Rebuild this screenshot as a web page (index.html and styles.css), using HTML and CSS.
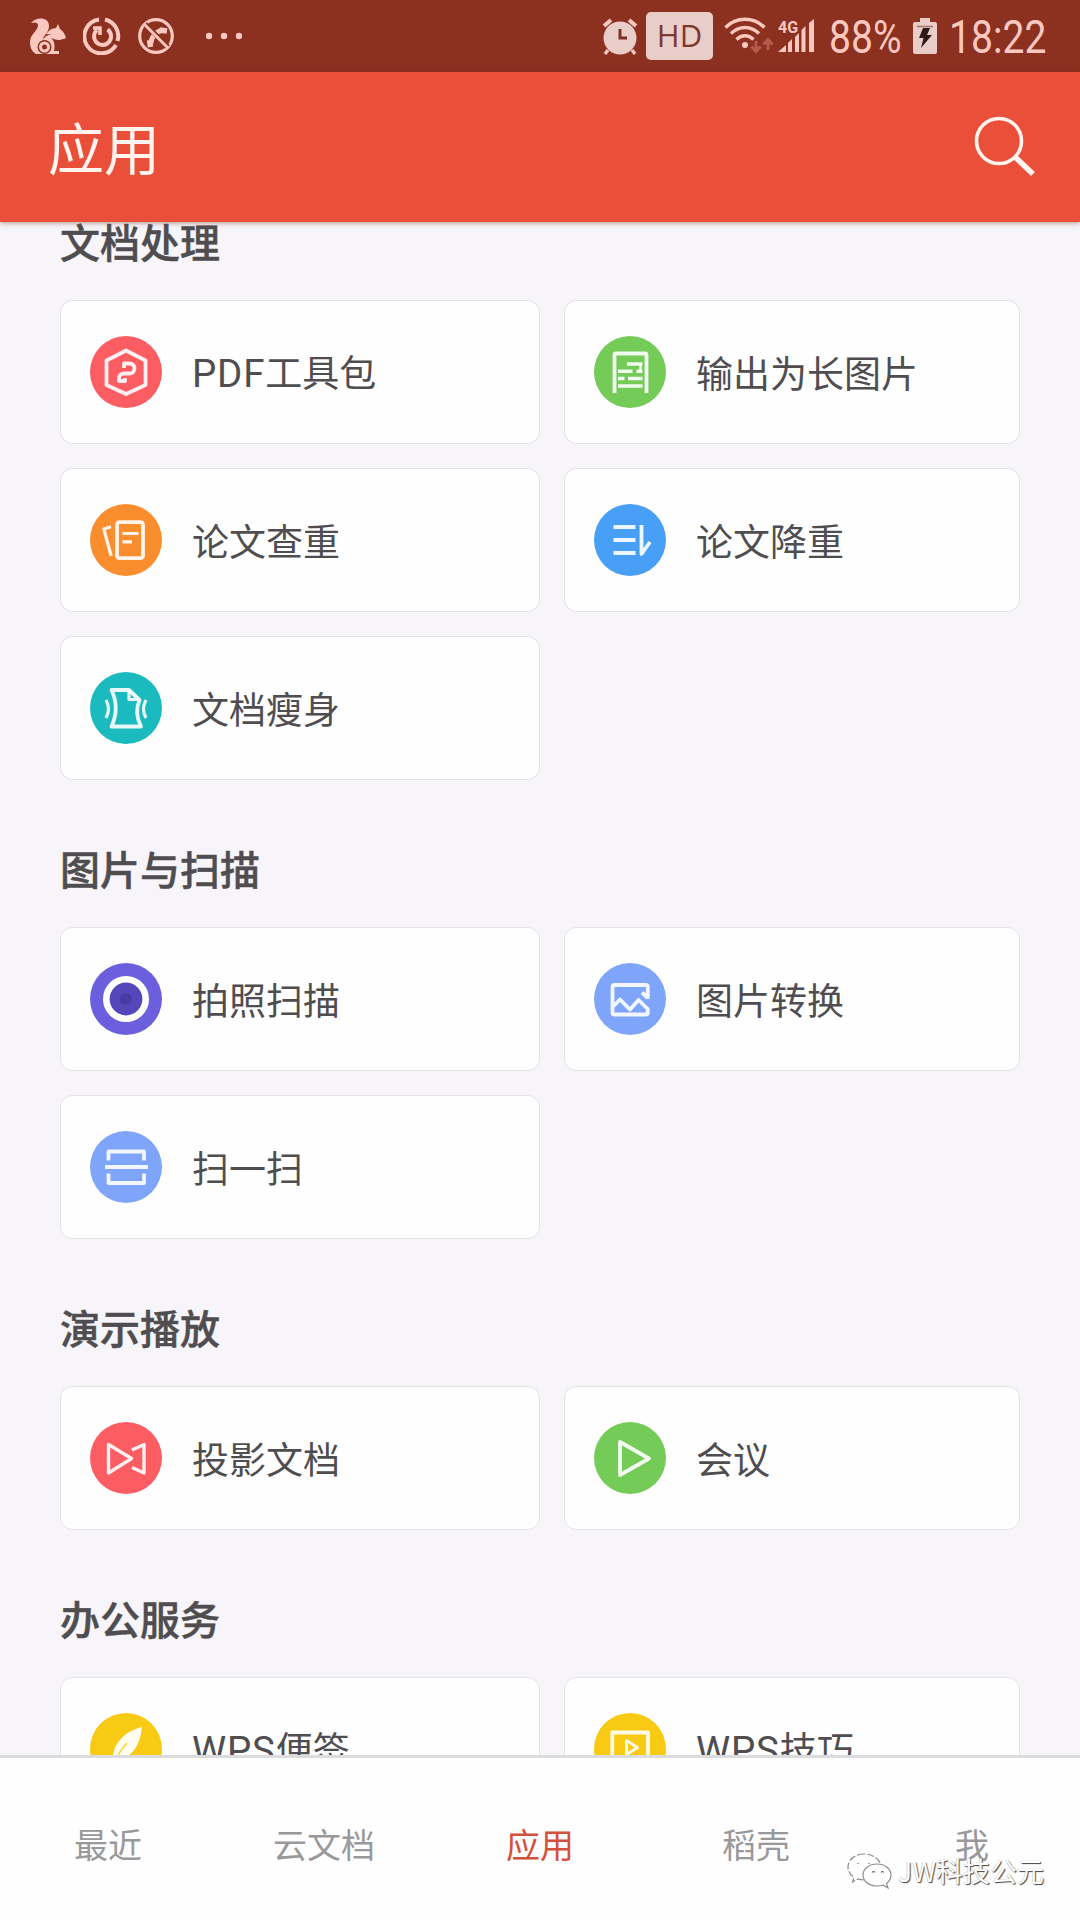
FILE: index.html
```html
<!DOCTYPE html>
<html lang="zh-CN">
<head>
  <meta charset="UTF-8" />
  <meta name="viewport" content="width=device-width, initial-scale=1.0" />
  <title>应用</title>
  <link rel="stylesheet" href="styles.css">
</head>
<body>
  <div class="status-bar">
    <div class="status-left">
      <svg width="36" height="36" viewBox="0 0 36 36" fill="currentColor">
        <path d="M1 5C5-1 19-2 19 8c0 7-6 9-6 14 2-5 7-6 11-5 3 1 5 3 10 3-4 4-10 1-13 0 4 3 4 9 3 13h5v3H6C1 33 0 28 0 24 0 16 8 13 8 7 8 4 4 4 1 5z"/>
        <path d="M16 16c3-4 6-6 10-6l2-4 2 5c3 2 5 5 6 9-3 2-8 1-10-1-3-2-6-3-10-3z"/>
        <circle cx="14.500" cy="29" r="7" fill="#8c3020"/>
        <circle cx="14.500" cy="29" r="4" fill="none" stroke="currentColor" stroke-width="3"/>
      </svg>
      <svg class="gap-m" width="38" height="38" viewBox="0 0 38 38" fill="none" stroke="currentColor" stroke-width="4">
        <path d="M22 2.500A17 17 0 0 1 34.500 24M33 28A17 17 0 1 1 16 2.500"/>
        <path d="M24.500 12.500A8.500 8.500 0 1 1 14 13"/>
        <path d="M10 11h7v7" stroke-width="3.500"/>
      </svg>
      <svg class="gap-m" width="36" height="36" viewBox="0 0 36 36" fill="none" stroke="currentColor">
        <circle cx="18" cy="18" r="16.300" stroke-width="3.200"/>
        <path d="M26 12.500c-6-1-13 6-13 13" stroke-width="5"/>
        <path d="M21.500 12l7.500 1M11.500 22l1 7" stroke-width="5.500"/>
        <path d="M7 6l23 23" stroke="#8c3020" stroke-width="5"/>
        <path d="M6 6l24 24" stroke-width="3"/>
      </svg>
      <svg class="gap-l" width="38" height="8" viewBox="0 0 38 8" fill="currentColor">
        <circle cx="4" cy="4" r="3.200"/><circle cx="19" cy="4" r="3.200"/><circle cx="34" cy="4" r="3.200"/>
      </svg>
    </div>
    <div class="status-right">
      <svg width="36" height="38" viewBox="0 0 36 38">
        <circle cx="18" cy="21" r="16.500" fill="#e9cdc9"/>
        <path d="M2 9l7-6M34 9l-7-6" stroke="#f6c7bf" stroke-width="4"/>
        <path d="M6 33l-3 4M30 33l3 4" stroke="#f6c7bf" stroke-width="3.500"/>
        <path d="M18 12v9h7" fill="none" stroke="#7c3026" stroke-width="3"/>
      </svg>
      <span class="hd">HD</span>
      <svg class="wifi" width="50" height="38" viewBox="0 0 50 38" fill="none" stroke="currentColor" stroke-width="3.400">
        <path d="M1.500 10.500C12-.5 30-.5 40.500 10.500"/>
        <path d="M7 16.500c8-8 20-8 28 0"/>
        <path d="M12.500 22.500c5-5 12-5 17 0"/>
        <circle cx="21" cy="28" r="3" fill="currentColor" stroke="none"/>
        <path d="M32 24v10M27.500 29.500l4.500 5 4.500-5M44 33V23M39.500 27.500l4.500-5 4.500 5" stroke="#b75a4c" stroke-width="3"/>
      </svg>
      <svg class="signal" width="37" height="34" viewBox="0 0 37 34" fill="currentColor">
        <text x="0" y="14" class="net">4G</text>
        <path d="M0 33l8-7v7zM10 24l4-4v13h-4zM17 18l4-4v19h-4zM23.500 11l4-4v26h-4zM31 4l5-4v33h-5z"/>
      </svg>
      <span class="status-text battery-text">88%</span>
      <svg class="battery" width="24" height="36" viewBox="0 0 24 36">
        <path d="M7 0h10v4h5q2 0 2 2v28q0 2-2 2H2q-2 0-2-2V6q0-2 2-2h5z" fill="#e9cdc9"/>
        <path d="M4 8.500h16" stroke="#a9756c" stroke-width="1.600"/>
        <path d="M10 10h7l-3 7h5L8 30l2.500-10H6z" fill="#2b1a18"/>
      </svg>
      <span class="status-text clock">18:22</span>
    </div>
  </div>

  <header class="app-bar">
    <h1>应用</h1>
    <svg width="62" height="62" viewBox="0 0 62 62" fill="none" stroke="#fff4ee">
      <circle cx="26" cy="26" r="22.500" stroke-width="3.600"/>
      <path d="M42 42l18 17" stroke-width="5.500"/>
    </svg>
  </header>

  <main class="content">
    <section class="group">
      <h2>文档处理</h2>
      <div class="cards">
        <div class="card">
          <svg class="icon" viewBox="0 0 72 72">
            <circle class="red" cx="36" cy="36" r="36"/>
            <path d="M36 14.500l19.500 10v24.500L36 58 16.500 49V24.500z"/>
            <path d="M34 32v-4.500h5.500a5 5 0 0 1 0 10H34a5 5 0 0 0-5 5v2.500h6v-3"/>
          </svg>
          <span><span class="latin">PDF</span>工具包</span>
        </div>
        <div class="card">
          <svg class="icon" viewBox="0 0 72 72">
            <circle class="green" cx="36" cy="36" r="36"/>
            <path d="M20.500 57V19q0-1.500 1.500-1.500h29q1.500 0 1.500 1.500v38"/>
            <path d="M33 28h15.500M24 35.300h14.500M42.500 35.300h6M24 42.600h6.500M34 42.600h14.500M24 50h24.500" stroke-width="3.500"/>
            <path d="M46.500 27v8" stroke-width="2.500"/>
          </svg>
          <span>输出为长图片</span>
        </div>
        <div class="card">
          <svg class="icon" viewBox="0 0 72 72">
            <circle class="orange" cx="36" cy="36" r="36"/>
            <rect x="27" y="18.200" width="26" height="36" rx="2.500"/>
            <path d="M32.500 29.500h16M32.500 37.800h9.500M21 22.700L13.800 25l7.400 27" stroke-width="3.200"/>
          </svg>
          <span>论文查重</span>
        </div>
        <div class="card">
          <svg class="icon" viewBox="0 0 72 72">
            <circle class="blue" cx="36" cy="36" r="36"/>
            <path d="M19.500 23h22M19.500 36h22M19.500 49h22M47.500 21v29L56 38"/>
          </svg>
          <span>论文降重</span>
        </div>
        <div class="card">
          <svg class="icon" viewBox="0 0 72 72">
            <circle class="teal" cx="36" cy="36" r="36"/>
            <path d="M39 18H21.500Q30 36 21.500 54.500h29.500Q44 41 49.500 28z"/>
            <path d="M39 18v9.500h10.500M16 28q5 9 0 18M56 28q-5 9 0 18" stroke-width="3.200"/>
          </svg>
          <span>文档瘦身</span>
        </div>
      </div>
    </section>

    <section class="group">
      <h2>图片与扫描</h2>
      <div class="cards">
        <div class="card">
          <svg class="icon" viewBox="0 0 72 72">
            <circle class="purple" cx="36" cy="36" r="36"/>
            <circle class="lens" cx="36" cy="36" r="19.700"/>
            <circle class="pupil" cx="36" cy="36" r="6"/>
          </svg>
          <span>拍照扫描</span>
        </div>
        <div class="card">
          <svg class="icon" viewBox="0 0 72 72">
            <circle class="sky" cx="36" cy="36" r="36"/>
            <path d="M53.800 36V24q0-2-2-2H20.500q-2 0-2 2v25.500q0 2 2 2h31.300q2 0 2-2V46L44.500 37 36 46.500 26 36.500l-7 7M48 29.500l5.800 5.500"/>
          </svg>
          <span>图片转换</span>
        </div>
        <div class="card">
          <svg class="icon" viewBox="0 0 72 72">
            <circle class="sky" cx="36" cy="36" r="36"/>
            <path d="M18.500 29.500v-9h35.500v9M15 36h43M18.500 42.500v9.500h35.500v-9.500"/>
          </svg>
          <span>扫一扫</span>
        </div>
      </div>
    </section>

    <section class="group">
      <h2>演示播放</h2>
      <div class="cards">
        <div class="card">
          <svg class="icon" viewBox="0 0 72 72">
            <circle class="red" cx="36" cy="36" r="36"/>
            <path d="M18.500 22.500v28.500L41.500 36.500zM42 28l12-5.500v28.500L42 45.500" stroke-width="3.400"/>
          </svg>
          <span>投影文档</span>
        </div>
        <div class="card">
          <svg class="icon" viewBox="0 0 72 72">
            <circle class="green" cx="36" cy="36" r="36"/>
            <path d="M26 20v33l29-16.500z"/>
          </svg>
          <span>会议</span>
        </div>
      </div>
    </section>

    <section class="group">
      <h2>办公服务</h2>
      <div class="cards">
        <div class="card">
          <svg class="icon" viewBox="0 0 72 72">
            <circle class="yellow" cx="36" cy="36" r="36"/>
            <path class="solid" d="M52 14C36 18 24 29 23 44l-3 12 4-2 3-7c14-2 23-13 25-33z"/>
            <path class="vein" d="M37 30Q28 39 23 54"/>
          </svg>
          <span><span class="latin">WPS</span>便签</span>
        </div>
        <div class="card">
          <svg class="icon" viewBox="0 0 72 72">
            <circle class="yellow" cx="36" cy="36" r="36"/>
            <rect x="18.300" y="19.500" width="35.700" height="32"/>
            <path d="M32.500 27.500v14L43.500 34.500z" stroke-width="3"/>
          </svg>
          <span><span class="latin">WPS</span>技巧</span>
        </div>
      </div>
    </section>
  </main>

  <nav class="tabs">
    <a>最近</a>
    <a>云文档</a>
    <a class="active">应用</a>
    <a>稻壳</a>
    <a>我</a>
  </nav>

  <div class="watermark">
    <svg width="46" height="38" viewBox="0 0 46 38" fill="#fff" stroke="#8d8d8d" stroke-width="1.200">
      <path d="M17 2C8 2 1 8 1 15c0 4 2 8 6 10l-1.500 5L11 27c3 1 6 1 9 1 9 0 14-6 14-13S26 2 17 2z" stroke-dasharray="7 2"/>
      <path d="M30 12c-8 0-14 5-14 11s6 11 14 11c2 0 4 0 6-1l5 3-1.500-4.500C42 29.500 44 26.500 44 23c0-6-6-11-14-11z"/>
      <path d="M11 11v1M22 11v1M25 20.500q1.500-2 3 0M34 20.500q1.500-2 3 0" fill="none" stroke="#666"/>
    </svg>
    <span>JW科技公元</span>
  </div>
</body>
</html>
```
FILE: styles.css
```css
* {
  box-sizing: border-box;
}
body {
  margin: 0;
  height: 1920px;
  display: flex;
  flex-direction: column;
  overflow: hidden;
  background: #f7f5f9;
  font-family: 'Noto Sans CJK SC', sans-serif;
  color: #4f4d50;
}
svg {
  display: block;
  flex: none;
}
h1, h2 {
  margin: 0;
}

/* status bar */
.status-bar {
  flex: none;
  height: 72px;
  padding: 0 33px 0 30px;
  display: flex;
  justify-content: space-between;
  align-items: center;
  background: #8c3020;
  color: #fbc8bf;
}
.status-left, .status-right {
  display: flex;
  align-items: center;
}
.gap-m { margin-left: 17px; }
.gap-l { margin-left: 31px; }
.hd {
  width: 67px;
  height: 48px;
  margin-left: 8px;
  border-radius: 5px;
  background: #e9cdc9;
  color: #80382e;
  font: 31px/47px 'Open Sans', sans-serif;
  text-align: center;
}
.wifi { margin-left: 11px; }
.signal {
  margin-left: 4px;
  overflow: visible;
}
.net {
  font: bold 16px Roboto, sans-serif;
}
.status-text {
  padding-top: 2px;
  font: 46px/72px Roboto, sans-serif;
  transform: scaleX(0.85);
  transform-origin: 0 50%;
  white-space: nowrap;
}
.battery-text {
  width: 72px;
  margin-left: 14px;
}
.battery { margin-left: 12px; }
.clock {
  width: 98px;
  margin-left: 12px;
}

/* title bar */
.app-bar {
  flex: none;
  height: 150px;
  padding: 0 45px 2px 48px;
  display: flex;
  justify-content: space-between;
  align-items: center;
  background: #ea5039;
  box-shadow: 0 1px 5px rgba(120, 50, 40, 0.5);
  z-index: 1;
}
.app-bar h1 {
  font-size: 56px;
  line-height: 80px;
  font-weight: 400;
  color: #fff4ee;
}

/* app list */
.content {
  flex: 1;
  min-height: 0;
  padding: 0 60px;
  overflow: hidden;
}
.group {
  margin-bottom: 69px;
}
.group h2 {
  margin-bottom: 40px;
  font-size: 40px;
  line-height: 38px;
  font-weight: 500;
  -webkit-text-stroke: 0.5px #4f4d50;
}
.cards {
  display: grid;
  grid-template-columns: 480px 456px;
  grid-auto-rows: 144px;
  gap: 24px;
}
.card {
  display: flex;
  align-items: center;
  gap: 30px;
  padding-left: 29px;
  border: 1px solid #e3e2e6;
  border-radius: 12px;
  background: #fefefe;
  font-size: 37px;
  line-height: 54px;
  white-space: nowrap;
}
.latin {
  font-family: Roboto, sans-serif;
  font-size: 38.5px;
  letter-spacing: 0.8px;
}

/* round icons */
.icon {
  width: 72px;
  height: 72px;
  fill: none;
  stroke: #fff;
  stroke-opacity: 0.9;
  stroke-width: 3.8;
  stroke-linejoin: round;
}
.red { fill: #fc5d63; stroke: none; }
.green { fill: #74cb58; stroke: none; }
.orange { fill: #fa8d2e; stroke: none; }
.blue { fill: #489ff6; stroke: none; }
.teal { fill: #1bbabf; stroke: none; }
.purple { fill: #6b5fde; stroke: none; }
.sky { fill: #7fa5fa; stroke: none; }
.yellow { fill: #f9ca14; stroke: none; }
.lens {
  fill: #5547b9;
  stroke-width: 6.6;
  stroke-opacity: 1;
}
.pupil { fill: #493ba5; stroke: none; }
.solid { fill: #fffdf0; stroke: none; }
.vein { stroke: #f9ca14; stroke-width: 1.5; }

/* bottom tabs */
.tabs {
  flex: none;
  height: 165px;
  padding-top: 9px;
  display: flex;
  align-items: center;
  border-top: 3px solid #dcdbdd;
  background: #fefefe;
}
.tabs a {
  flex: 1;
  text-align: center;
  font-size: 34px;
  color: #99989b;
}
.tabs .active { color: #d5503c; }

.watermark {
  position: absolute;
  right: 36px;
  bottom: 30px;
  display: flex;
  align-items: center;
  gap: 5px;
  font-size: 27px;
  line-height: 38px;
  color: #fff;
  text-shadow: 1px 1px 1px #444, 0 0 1px #999;
}
```
